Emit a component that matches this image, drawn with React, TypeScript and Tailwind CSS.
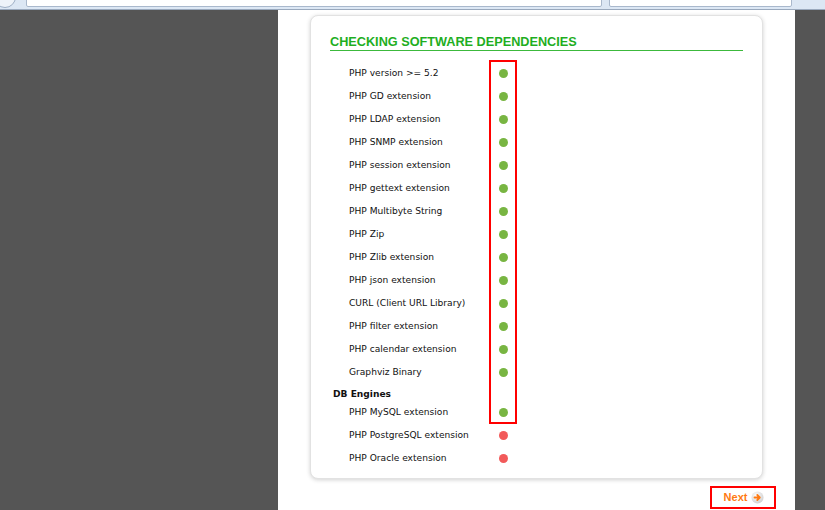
import React from "react";

const items: { label: string; ok: boolean }[] = [
  { label: "PHP version >= 5.2", ok: true },
  { label: "PHP GD extension", ok: true },
  { label: "PHP LDAP extension", ok: true },
  { label: "PHP SNMP extension", ok: true },
  { label: "PHP session extension", ok: true },
  { label: "PHP gettext extension", ok: true },
  { label: "PHP Multibyte String", ok: true },
  { label: "PHP Zip", ok: true },
  { label: "PHP Zlib extension", ok: true },
  { label: "PHP json extension", ok: true },
  { label: "CURL (Client URL Library)", ok: true },
  { label: "PHP filter extension", ok: true },
  { label: "PHP calendar extension", ok: true },
  { label: "Graphviz Binary", ok: true },
];

const db: { label: string; ok: boolean }[] = [
  { label: "PHP MySQL extension", ok: true },
  { label: "PHP PostgreSQL extension", ok: false },
  { label: "PHP Oracle extension", ok: false },
];

function Row({ label, ok }: { label: string; ok: boolean }) {
  return (
    <div className="flex h-[23px] items-center">
      <div className="w-[169px] pl-[19px] text-[9.1px] text-[#111111]">{label}</div>
      <div
        className={
          ok
            ? "h-[9px] w-[9px] rounded-full bg-[#78b542]"
            : "h-[9px] w-[9px] rounded-full bg-[#f25a5a]"
        }
      />
    </div>
  );
}

export default function App() {
  return (
    <div
      className="flex h-[510px] w-[825px] flex-col overflow-hidden bg-[#555555]"
      style={{ fontFamily: '"DejaVu Sans", Verdana, sans-serif' }}
    >
      {/* browser chrome strip */}
      <div className="relative h-[10px] shrink-0 border-b border-[#9aa9bd] bg-[#dce7f4]">
        <div className="absolute -top-[14px] -left-[6px] h-[22px] w-[22px] rounded-full border border-[#9fb0c6] bg-[#eef3f9]" />
        <div className="absolute -top-[2px] left-[26px] h-[9px] w-[576px] rounded-b-[2px] border border-[#a9b8cc] bg-white" />
        <div className="absolute -top-[2px] left-[609px] h-[9px] w-[183px] rounded-b-[2px] border border-[#a9b8cc] bg-white" />
      </div>

      <div className="flex flex-1">
        <div className="w-[278px] shrink-0" />
        <div className="flex w-[517px] shrink-0 flex-col bg-white">
          <div className="relative mt-[5px] ml-[32px] h-[464px] w-[453px] rounded-[8px] border border-[#e2e2e2] bg-white shadow-[0_1px_4px_rgba(0,0,0,0.18)]">
            <div className="px-[19px] pt-[19px]">
              <div
                className="border-b border-[#3cb93c] text-[12.7px] leading-[15px] font-bold text-[#1fae1f]"
                style={{ fontFamily: '"Liberation Sans", Arial, sans-serif' }}
              >
                CHECKING SOFTWARE DEPENDENCIES
              </div>
              <div className="mt-[11px]">
                {items.map((it) => (
                  <Row key={it.label} {...it} />
                ))}
                <div className="h-[17px] pt-[4px] pl-[3px] text-[9.1px] leading-[12px] font-bold text-[#111111]">
                  DB Engines
                </div>
                {db.map((it) => (
                  <Row key={it.label} {...it} />
                ))}
              </div>
            </div>
            {/* highlight box */}
            <div className="absolute top-[44px] left-[178px] h-[364px] w-[28px] border-2 border-[#ff0000]" />
          </div>

          <div className="mt-[7px] ml-[432px] flex h-[23px] w-[66px] items-center justify-center gap-[4px] border-2 border-[#ff0000] pl-[2px]">
            <span
              className="text-[11px] font-bold text-[#ff7a12]"
              style={{ fontFamily: '"Liberation Sans", Arial, sans-serif' }}
            >
              Next
            </span>
            <svg width="13" height="13" viewBox="0 0 13 13">
              <defs>
                <radialGradient id="g" cx="40%" cy="35%" r="70%">
                  <stop offset="0%" stopColor="#ffffff" />
                  <stop offset="100%" stopColor="#cfcfcf" />
                </radialGradient>
              </defs>
              <circle cx="6.5" cy="6.5" r="6" fill="url(#g)" />
              <path
                d="M3.5 6.5 H8.5 M6.3 4 L8.8 6.5 L6.3 9"
                stroke="#ff7a12"
                strokeWidth="1.8"
                fill="none"
                strokeLinecap="round"
                strokeLinejoin="round"
              />
            </svg>
          </div>
        </div>
        <div className="flex-1" />
      </div>
    </div>
  );
}
